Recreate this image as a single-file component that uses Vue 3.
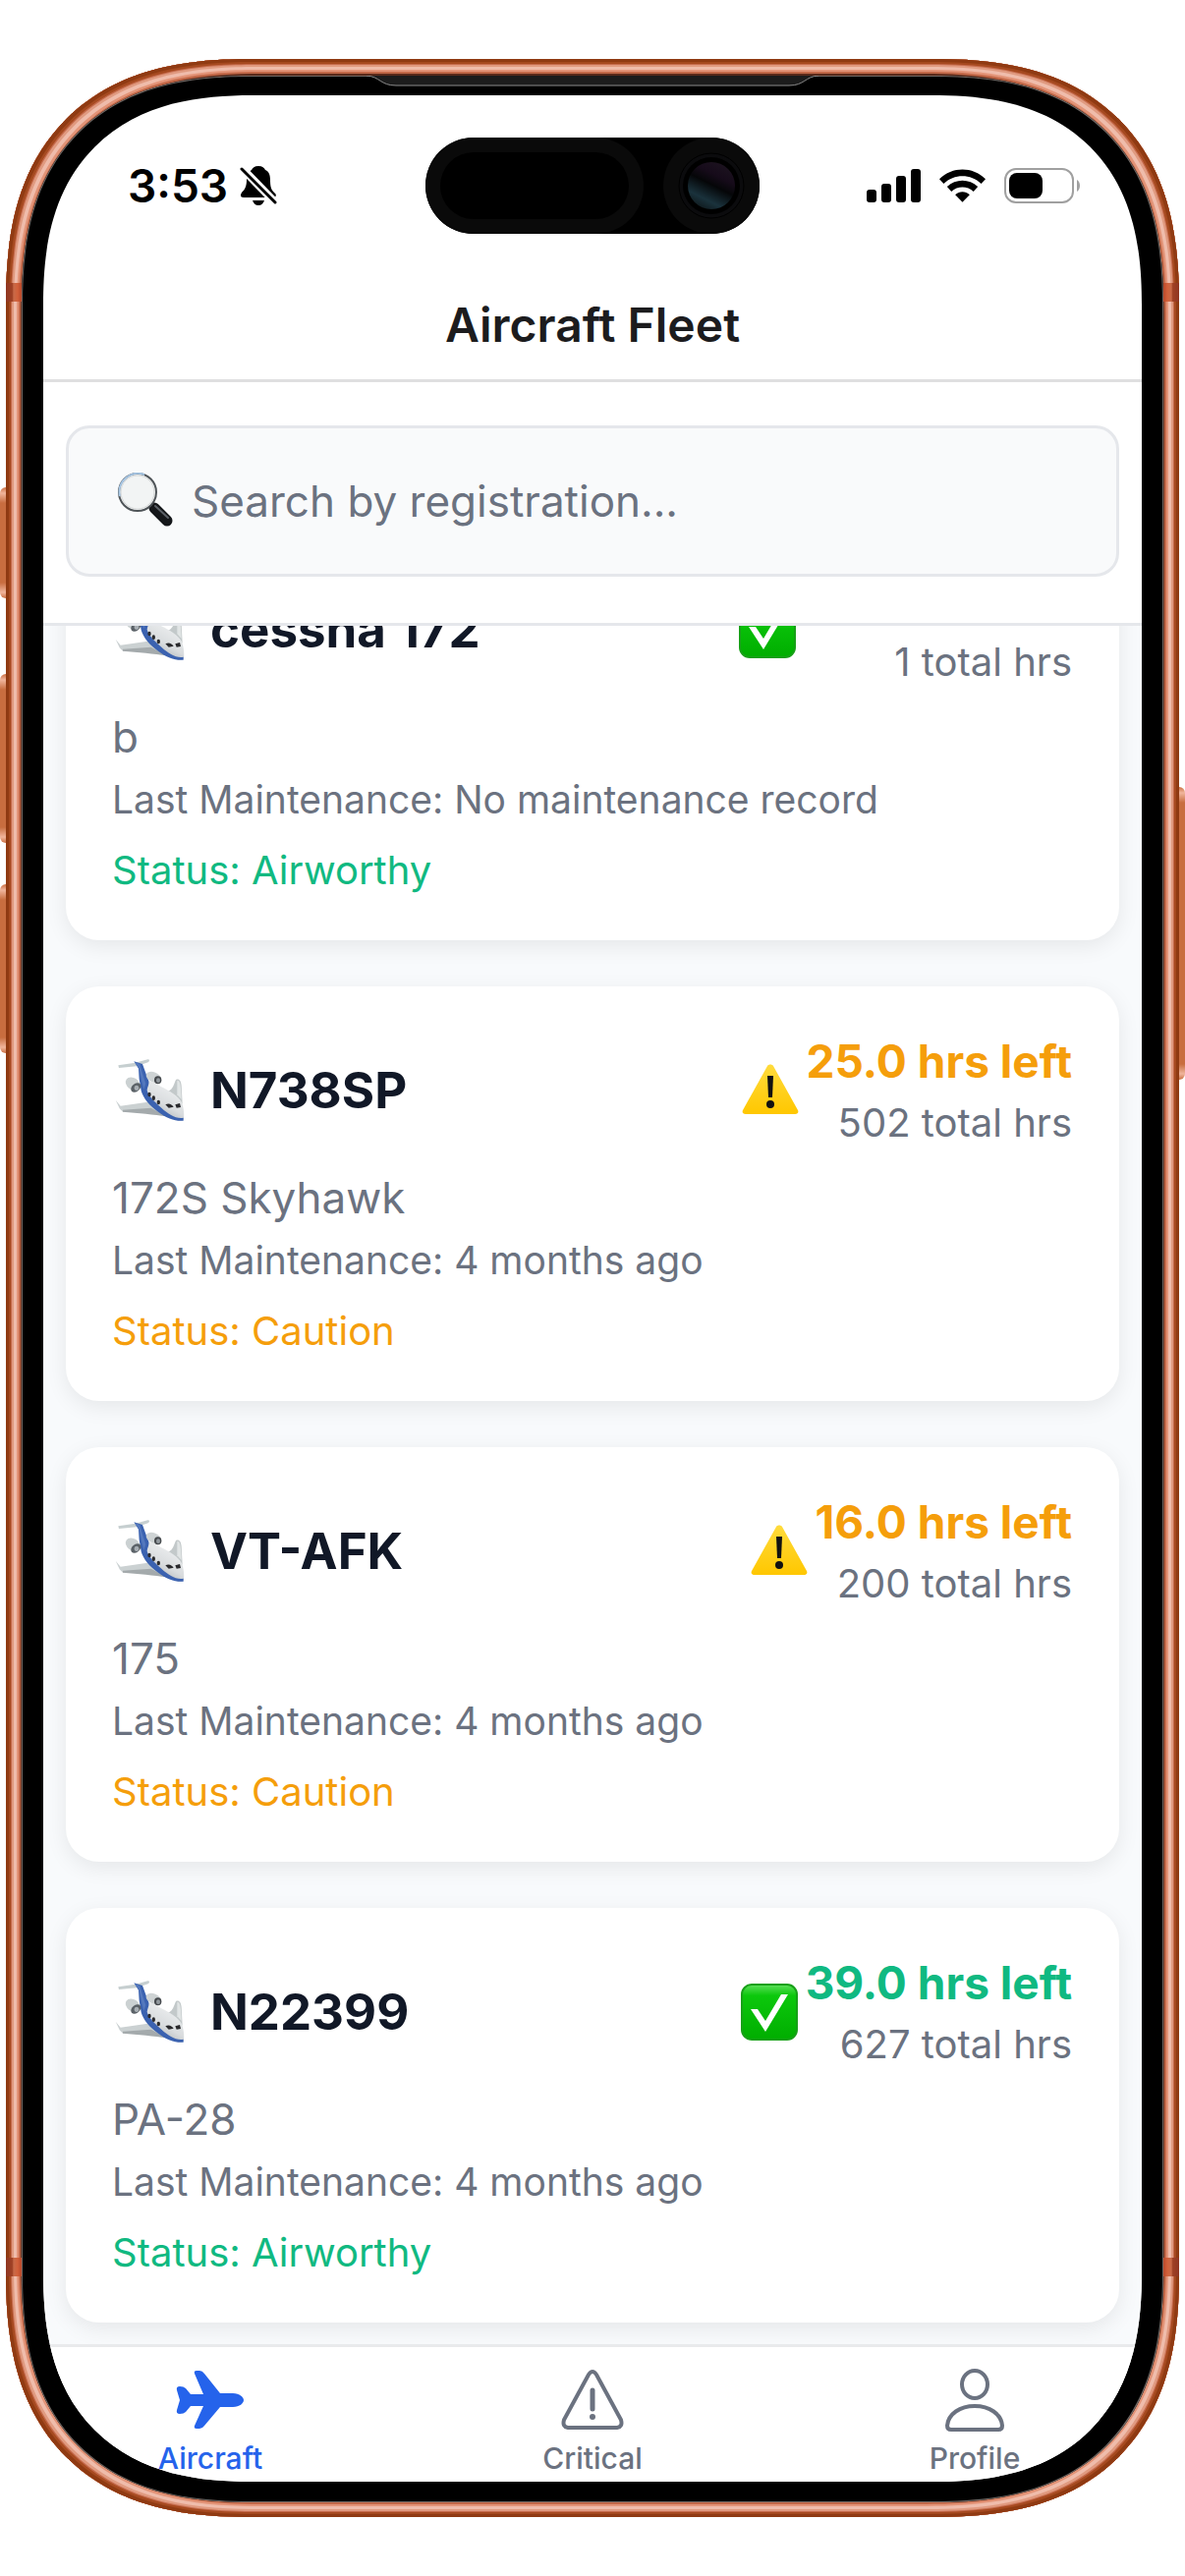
<template>
  <div class="stage">
    <div class="phone">
      <span class="side-button action"></span>
      <span class="side-button volume-up"></span>
      <span class="side-button volume-down"></span>
      <span class="side-button power"></span>
      <span class="band top left"></span>
      <span class="band top right"></span>
      <span class="band bottom left"></span>
      <span class="band bottom right"></span>

      <div class="bezel">
        <svg class="earpiece" viewBox="0 0 460 11" aria-hidden="true">
          <path d="M0 0C14 1 14 10 30 10H430C446 10 446 1 460 0Z" fill="#1c1c1c" />
          <path d="M0 0C14 1 14 10 30 10H430C446 10 446 1 460 0" fill="none" stroke="#8b8b8b" />
        </svg>

        <div class="screen">
          <div class="status-bar">
            <div class="status-left">
              <span class="time">3:53</span>
              <svg class="bell" viewBox="0 0 38 42" aria-hidden="true">
                <path
                  d="M19 1C15 1 13 3 12 5C9 7 7 10 7 15C7 22 5 25 2 28C0 31 1 33 4 33H34C37 33 38 30 35 28C32 25 31 22 31 15C31 9 29 6 26 5C25 3 23 1 19 1Z"
                />
                <path d="M13 36H25C24 39 22 41 19 41S14 39 13 36Z" />
                <path d="M1 2L37 39" stroke="#fff" stroke-width="8" />
                <path d="M2 4L36 38" stroke="#000" stroke-width="3" stroke-linecap="round" />
              </svg>
            </div>
            <svg class="island" viewBox="0 0 340 98" aria-hidden="true">
              <defs>
                <linearGradient id="lens" x1="0.8" y1="0" x2="0.3" y2="1">
                  <stop offset="0" stop-color="#1d1420" />
                  <stop offset="0.3" stop-color="#160b1a" />
                  <stop offset="0.5" stop-color="#050608" />
                  <stop offset="0.8" stop-color="#1a323c" />
                  <stop offset="1" stop-color="#101a1e" />
                </linearGradient>
              </defs>
              <rect width="340" height="98" rx="49" fill="#000" />
              <rect width="222" height="98" rx="49" fill="#0a0a0a" />
              <rect x="15" y="15" width="192" height="68" rx="34" fill="#000" />
              <circle cx="291" cy="49" r="49" fill="#0a0a0a" />
              <circle cx="291" cy="49" r="33" fill="#0b0b0d" stroke="#000" />
              <circle cx="291" cy="49" r="29" fill="#000" />
              <circle cx="291" cy="49" r="24" fill="url(#lens)" />
            </svg>
            <div class="status-right">
              <svg class="signal" viewBox="0 0 55 34" aria-hidden="true">
                <rect y="21" width="10" height="13" rx="3" />
                <rect x="15" y="15" width="10" height="19" rx="3" />
                <rect x="30" y="7" width="10" height="27" rx="3" />
                <rect x="45" width="10" height="34" rx="3" />
              </svg>
              <svg class="wifi" viewBox="0 0 48 34" aria-hidden="true">
                <path d="M24 34L16.500 26.500C20.500 22.500 27.500 22.500 31.500 26.500Z" />
                <path d="M8 18C17 9.500 31 9.500 40 18L35.500 23C29 17 19 17 12.500 23Z" />
                <path d="M0 10C13.500-3.300 34.500-3.300 48 10L43.500 15C32.500 4.500 15.500 4.500 4.500 15Z" />
              </svg>
              <svg class="battery" viewBox="0 0 78 36" aria-hidden="true">
                <rect x="1" y="1" width="69" height="34" rx="11" fill="none" stroke="#a0a0a0" stroke-width="2" />
                <rect x="5" y="5" width="34" height="26" rx="8" />
                <path d="M74 12C78 14 78 22 74 24Z" fill="#a0a0a0" />
              </svg>
            </div>
          </div>

          <header class="title-bar">
            <h1>Aircraft Fleet</h1>
          </header>

          <div class="search-section">
            <label class="search-box">
              <svg class="search-icon" viewBox="0 0 58 58" aria-label="Search">
                <path d="M35 33L42 40" stroke="#8c7a68" stroke-width="3" />
                <path d="M38 36L51 49" stroke="#15171a" stroke-width="11" stroke-linecap="round" />
                <path d="M39 34L52 46" stroke="#5d6268" stroke-width="2" stroke-linecap="round" />
                <circle cx="21" cy="20" r="19" fill="#f2f4f4" stroke="#4f5458" stroke-width="2" />
                <path d="M3 24A19 19 0 0 1 28 2" fill="none" stroke="#a5c4e2" stroke-width="2" />
                <circle cx="21" cy="20" r="17" fill="none" stroke="#d5d7d7" />
              </svg>
              <input v-model="query" type="text" placeholder="Search by registration..." />
            </label>
          </div>

          <main class="list">
            <article v-for="plane in filtered" :key="plane.registration" class="card">
              <div class="card-header">
                <div class="identity">
                  <svg class="plane-icon" viewBox="-9 -3 240 204" aria-hidden="true">
                    <defs>
                      <linearGradient id="hull" x1="0.8" y1="0.2" x2="0.4" y2="0.9">
                        <stop offset="0" stop-color="#eceeef" />
                        <stop offset="0.6" stop-color="#d9dcde" />
                        <stop offset="1" stop-color="#b3b8bb" />
                      </linearGradient>
                    </defs>
                    <path d="M10 22L62 14L100 4C106 4 107 9 101 13L66 25L12 30Z" fill="#c6cfd0" />
                    <path d="M2 128L17 146L100 134L158 176C130 172 90 164 24 164L14 154Z" fill="#cbd1d2" />
                    <path d="M24 158L110 152L158 178C120 172 70 168 24 164Z" fill="#a4aaac" />
                    <path d="M160 102C180 96 180 74 187 65C195 62 202 68 203 84L206 140Z" fill="#c3c9ca" />
                    <path d="M190 68C199 68 201 80 203 126L190 112Z" fill="#e1e5e5" />
                    <path
                      d="M96 68C112 68 128 80 142 88C166 100 194 116 204 136C211 154 213 180 208 190C190 196 160 178 140 162C112 142 92 122 86 90Z"
                      fill="url(#hull)"
                    />
                    <path
                      d="M58 10L84 18L100 62C108 76 100 84 98 98C102 116 122 134 142 152C164 172 186 186 209 182L209 191C186 194 158 184 132 164C106 146 86 122 80 100L74 64L72 32Z"
                      fill="#3b62b0"
                    />
                    <path d="M60 12L74 32L82 72L88 96L94 78L82 40L76 18Z" fill="#5478bd" />
                    <ellipse cx="54" cy="78" rx="23" ry="18" fill="#cbd1d2" transform="rotate(35 54 78)" />
                    <ellipse cx="64" cy="90" rx="17" ry="12" fill="#5a6167" transform="rotate(-40 64 90)" />
                    <ellipse cx="66" cy="91" rx="7" ry="8" fill="#a7aeb3" />
                    <ellipse cx="118" cy="58" rx="24" ry="15" fill="#ced3d4" transform="rotate(22 118 58)" />
                    <ellipse cx="131" cy="67" rx="11" ry="12" fill="#45494d" />
                    <ellipse cx="132" cy="68" rx="6" ry="7" fill="#92999e" />
                    <g fill="#29292c">
                      <ellipse cx="105" cy="111" rx="5" ry="7" />
                      <ellipse cx="118" cy="122" rx="5" ry="7" />
                      <ellipse cx="133" cy="135" rx="5" ry="7" />
                      <path d="M154 142C164 136 174 141 179 149L164 152Z" />
                      <path d="M184 142L198 138L201 150L188 152Z" />
                    </g>
                  </svg>
                  <h2>{{ plane.registration }}</h2>
                </div>

                <div class="summary">
                  <svg v-if="plane.status === 'Airworthy'" class="badge" viewBox="0 0 58 58" aria-hidden="true">
                    <defs>
                      <linearGradient id="tick" x1="0" y1="0" x2="0" y2="1">
                        <stop offset="0" stop-color="#5ce05a" />
                        <stop offset="0.2" stop-color="#0cc80c" />
                        <stop offset="1" stop-color="#00ad00" />
                      </linearGradient>
                    </defs>
                    <rect x="1" y="1" width="56" height="56" rx="10" fill="url(#tick)" stroke="#17a017" stroke-width="2" />
                    <path d="M10 26H17L25 38L41 11H48L25 49Z" fill="#fff" />
                  </svg>
                  <svg v-else class="badge" viewBox="0 0 58 58" aria-hidden="true">
                    <defs>
                      <linearGradient id="caution" x1="0" y1="0" x2="0" y2="1">
                        <stop offset="0" stop-color="#ffdb3c" />
                        <stop offset="1" stop-color="#ffc700" />
                      </linearGradient>
                    </defs>
                    <path
                      d="M26 4C27 2 31 2 32 4L57 49C58 51 57 53 54 53H4C1 53 0 51 1 49Z"
                      fill="url(#caution)"
                    />
                    <path d="M26 14H32L31 36H27Z" fill="#111" />
                    <circle cx="29" cy="43" r="4" fill="#111" />
                  </svg>
                  <div class="hours">
                    <p class="hours-left" :class="plane.status.toLowerCase()">{{ plane.left }} hrs left</p>
                    <p class="hours-total">{{ plane.total }} total hrs</p>
                  </div>
                </div>
              </div>
              <p class="model">{{ plane.model }}</p>
              <p class="maintenance">Last Maintenance: {{ plane.maintenance }}</p>
              <p class="status" :class="plane.status.toLowerCase()">Status: {{ plane.status }}</p>
            </article>
          </main>

          <nav class="tab-bar">
            <a href="#aircraft" class="tab active">
              <svg viewBox="0 0 70 64" aria-hidden="true">
                <path
                  fill="currentColor"
                  d="M19 5Q18 2 21 2H24Q27 2 29 5L45 25H58C65 25 69 29 69 32S65 39 58 39H45L29 58Q27 61 24 61H21Q18 61 19 58L28 38H15L10 44Q8 46 4 46Q0 46 1 42L4 32L1 22Q0 18 4 18Q8 18 10 20L15 26H28Z"
                />
              </svg>
              <span>Aircraft</span>
            </a>
            <a href="#critical" class="tab">
              <svg viewBox="0 0 64 64" aria-hidden="true">
                <path
                  fill="none"
                  stroke="currentColor"
                  stroke-width="4"
                  d="M28 6Q32 0 36 6L61 52Q63 59 57 60H7Q1 59 3 52Z"
                />
                <path d="M32 22V41" stroke="currentColor" stroke-width="5" stroke-linecap="round" />
                <circle cx="32" cy="49" r="3" fill="currentColor" />
              </svg>
              <span>Critical</span>
            </a>
            <a href="#profile" class="tab">
              <svg viewBox="0 0 64 64" aria-hidden="true">
                <g fill="none" stroke="currentColor" stroke-width="4">
                  <ellipse cx="32" cy="16" rx="13" ry="14" />
                  <path d="M8 62Q4 62 4 58C5 46 17 38 32 38S59 46 60 58Q60 62 56 62Z" />
                </g>
              </svg>
              <span>Profile</span>
            </a>
          </nav>
        </div>
      </div>
    </div>
  </div>
</template>

<script setup>
import { computed, ref } from 'vue';

const query = ref('');

const fleet = [
  { registration: 'cessna 172', model: 'b', left: '49.0', total: 1, maintenance: 'No maintenance record', status: 'Airworthy' },
  { registration: 'N738SP', model: '172S Skyhawk', left: '25.0', total: 502, maintenance: '4 months ago', status: 'Caution' },
  { registration: 'VT-AFK', model: '175', left: '16.0', total: 200, maintenance: '4 months ago', status: 'Caution' },
  { registration: 'N22399', model: 'PA-28', left: '39.0', total: 627, maintenance: '4 months ago', status: 'Airworthy' },
];

const filtered = computed(() =>
  fleet.filter((plane) => plane.registration.toLowerCase().includes(query.value.toLowerCase()))
);
</script>

<style>
body {
  margin: 0;
  background: #fff;
}
</style>

<style scoped>
* {
  box-sizing: border-box;
}

h1,
h2,
p {
  margin: 0;
}

svg {
  display: block;
  flex: none;
}

.stage {
  display: flex;
  height: 100vh;
  padding: 60px 6px;
  font-family: Inter, 'Liberation Sans', sans-serif;
  color: #6b7280;
}

/* Metal frame, built from rings that follow the rounded corners */
.phone {
  position: relative;
  display: flex;
  flex: 1;
  min-width: 0;
  padding: 17px 16px 15px;
  border-radius: 208px;
  background: #5a2a1a;
  box-shadow:
    inset 0 0 0 3px #8f3a12,
    inset 0 0 0 5px #a64a20,
    inset 0 0 0 6px #c4694a,
    inset 0 0 0 8px #e09a80,
    inset 0 0 0 11px #efbcab,
    inset 0 0 0 13px #e39478,
    inset 0 0 0 15px #c26848;
}

.side-button {
  position: absolute;
  width: 6px;
  background: linear-gradient(#cb7042, #f0b59c 6px, #c86d3f 16px, #c86d3f calc(100% - 16px), #f0b59c calc(100% - 6px), #cb7042);
}

.action {
  left: -6px;
  top: 436px;
  height: 113px;
  border-radius: 6px 0 0 6px;
}

.volume-up {
  left: -6px;
  top: 626px;
  height: 172px;
  border-radius: 6px 0 0 6px;
}

.volume-down {
  left: -6px;
  top: 840px;
  height: 172px;
  border-radius: 6px 0 0 6px;
}

.power {
  right: -6px;
  top: 741px;
  height: 298px;
  border-radius: 0 6px 6px 0;
}

/* Antenna bands */
.band {
  position: absolute;
  width: 16px;
  height: 19px;
  background: linear-gradient(90deg, #8f3520, #a04226 40%, #c86a48 50%, #d2603a 75%, #b8482a);
}

.band.top {
  top: 228px;
}

.band.bottom {
  bottom: 245px;
}

.band.left {
  left: 0;
}

.band.right {
  right: 0;
  transform: scaleX(-1);
}

.bezel {
  position: relative;
  display: flex;
  flex: 1;
  min-width: 0;
  padding: 20px 22px 21px;
  border-radius: 192px;
  background: #000;
  box-shadow: inset 0 0 0 1px #6f6763;
}

.earpiece {
  position: absolute;
  top: 0;
  left: 50%;
  width: 460px;
  height: 11px;
  transform: translateX(-50%);
}

.screen {
  display: flex;
  flex: 1;
  flex-direction: column;
  min-width: 0;
  overflow: hidden;
  border-radius: 174px;
  background: #fff;
}

/* Continuous corners where the browser can draw them */
@supports (corner-shape: superellipse(2)) {
  .phone,
  .bezel,
  .screen {
    corner-shape: superellipse(1.3);
  }

  .phone {
    border-radius: 250px;
  }

  .bezel {
    border-radius: 234px;
  }

  .screen {
    border-radius: 214px;
  }
}

.status-bar {
  display: grid;
  grid-template-columns: 1fr auto 1fr;
  align-items: center;
  padding: 43px 0 37px;
}

.island {
  width: 340px;
  height: 98px;
}

.status-left {
  display: flex;
  align-items: center;
  gap: 12px;
  padding-left: 86px;
}

.time {
  font-size: 46px;
  font-weight: 600;
  line-height: 56px;
  color: #000;
}

.bell {
  width: 38px;
  height: 42px;
}

.status-right {
  display: flex;
  align-items: center;
  justify-content: flex-end;
  gap: 19px;
  padding-right: 62px;
}

.signal {
  width: 55px;
  height: 34px;
}

.wifi {
  width: 47px;
  height: 34px;
}

.battery {
  width: 78px;
  height: 36px;
}

.title-bar {
  padding: 26px 0 25px;
  border-bottom: 3px solid #dfdfe0;
  text-align: center;
}

.title-bar h1 {
  font-size: 48px;
  font-weight: 600;
  line-height: 60px;
  color: #1c1c1e;
}

.search-section {
  padding: 44px 23px 47px;
  border-bottom: 3px solid #e5e7eb;
}

.search-box {
  display: flex;
  align-items: center;
  gap: 18px;
  height: 154px;
  padding: 0 49px;
  border: 3px solid #e5e7eb;
  border-radius: 24px;
  background: #f9fafb;
}

.search-icon {
  width: 58px;
  height: 58px;
}

.search-box input {
  flex: 1;
  min-width: 0;
  padding: 0;
  border: 0;
  outline: 0;
  background: transparent;
  font-family: inherit;
  font-size: 44px;
  line-height: 56px;
  color: #111827;
}

.search-box input::placeholder {
  color: #6b7280;
  opacity: 1;
}

/* The list rests at the end of its scroll range */
.list {
  display: flex;
  flex: 1;
  flex-direction: column;
  justify-content: flex-end;
  gap: 47px;
  min-height: 0;
  overflow: hidden;
  padding: 0 23px 22px;
  background: #f8fafc;
}

.card {
  flex: none;
  padding: 47px 48px 45px 47px;
  border-radius: 34px;
  background: #fff;
  box-shadow: 0 6px 22px rgba(0, 0, 0, 0.08);
}

.card-header {
  display: flex;
  align-items: center;
  justify-content: space-between;
  margin-bottom: 22px;
}

.identity {
  display: flex;
  align-items: center;
  gap: 20px;
}

.plane-icon {
  width: 80px;
  height: 68px;
}

.identity h2 {
  font-size: 51px;
  font-weight: 700;
  line-height: 60px;
  color: #111827;
}

.summary {
  display: flex;
  align-items: center;
  gap: 8px;
}

.badge {
  width: 58px;
  height: 58px;
}

.hours {
  text-align: right;
}

.hours-left {
  margin-bottom: 8px;
  font-size: 46px;
  font-weight: 700;
  line-height: 58px;
}

.hours-total,
.status {
  font-size: 40px;
  line-height: 52px;
}

.model {
  margin-bottom: 10px;
  font-size: 44px;
  line-height: 56px;
}

.maintenance {
  margin-bottom: 20px;
  font-size: 39px;
  line-height: 52px;
}

.airworthy {
  color: #10b981;
}

.caution {
  color: #f59e0b;
}

.tab-bar {
  display: flex;
  justify-content: space-between;
  padding: 22px 50px 7px;
  border-top: 3px solid #e9eaec;
  background: #fff;
}

.tab {
  display: flex;
  flex-direction: column;
  align-items: center;
  gap: 10px;
  width: 240px;
  font-size: 30px;
  font-weight: 500;
  line-height: 34px;
  color: #6b7280;
  text-decoration: none;
}

.tab svg {
  height: 64px;
}

.tab.active {
  color: #2563eb;
}
</style>
